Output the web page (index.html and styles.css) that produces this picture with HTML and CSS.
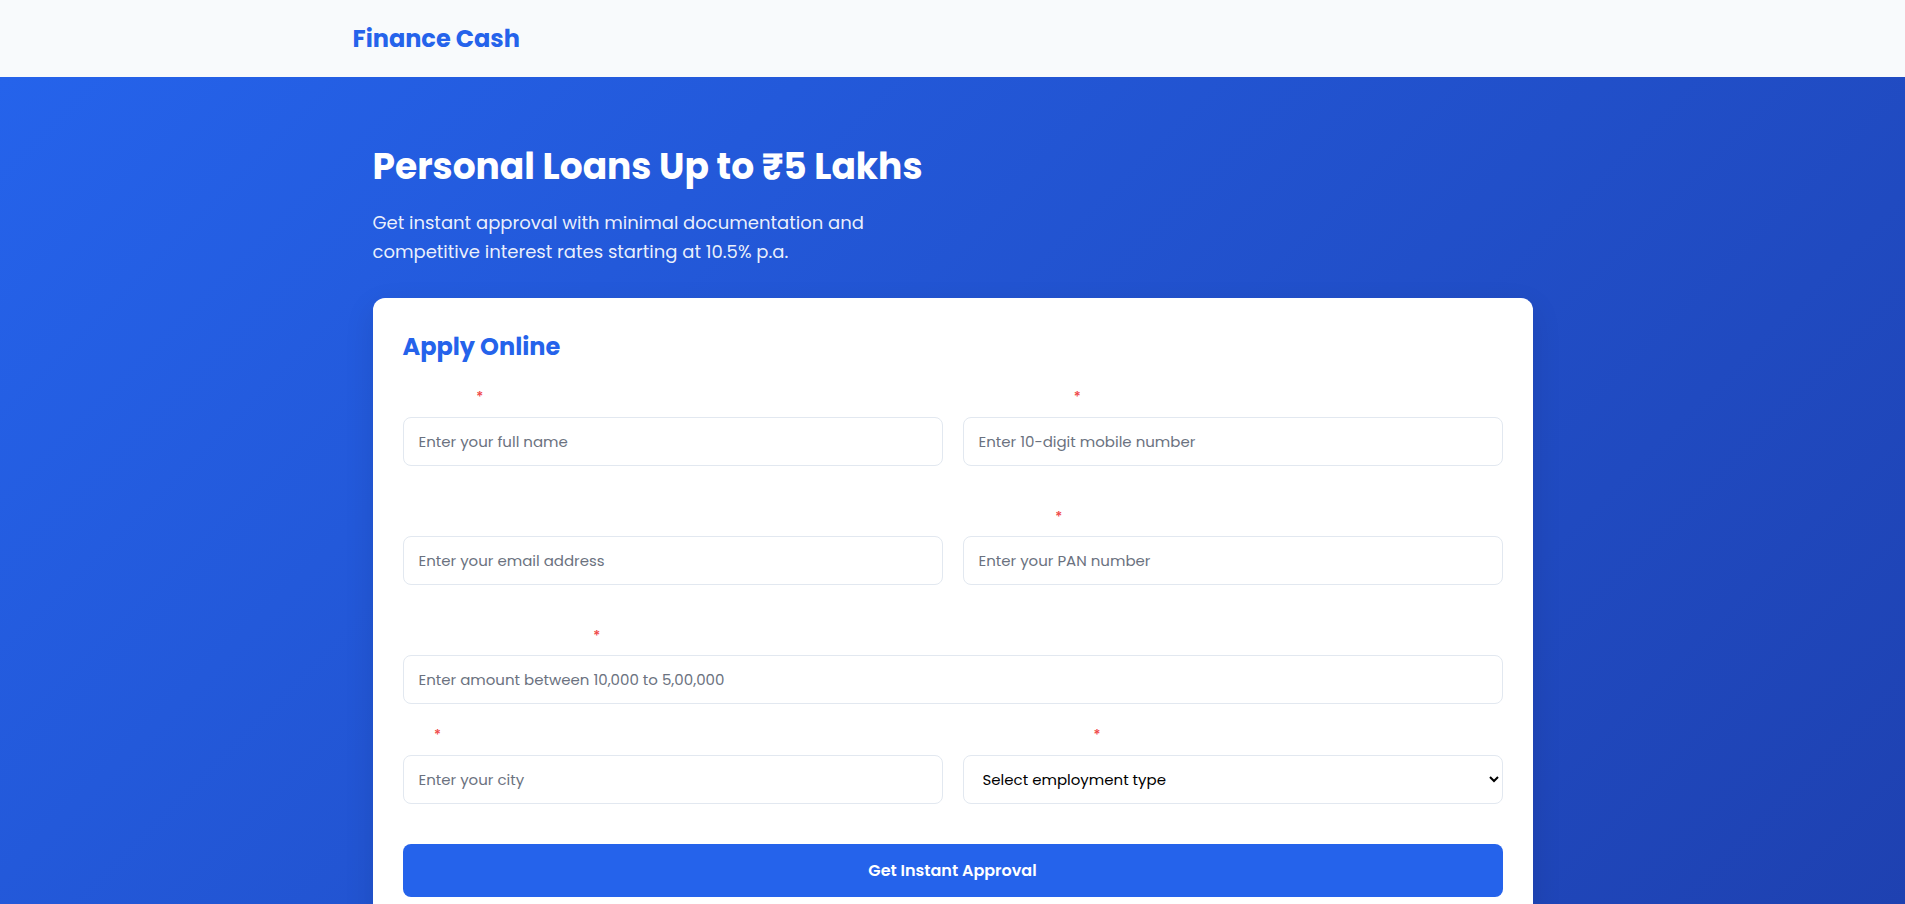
FILE: index.html
```html
<!DOCTYPE html>
<html lang="en">

<head>
    <meta charset="UTF-8">
    <meta name="viewport" content="width=device-width, initial-scale=1.0">
    <title>Finance Cash - Personal Loans</title>
    <link rel="stylesheet" href="styles.css">
</head>

<body>
    <header class="site-header">
        <div class="container">
            <a class="logo" href="#">Finance Cash</a>
        </div>
    </header>

    <section class="hero">
        <div class="container hero-inner">
            <h1>Personal Loans Up to ₹5 Lakhs</h1>
            <p class="hero-text">Get instant approval with minimal documentation and competitive interest rates starting at 10.5% p.a.</p>

            <div class="form-card">
                <h2>Apply Online</h2>
                <form id="loan-form">
                    <div class="form-row">
                        <div class="form-group">
                            <label for="name">Full Name <span class="required">*</span></label>
                            <input type="text" id="name" placeholder="Enter your full name">
                        </div>
                        <div class="form-group">
                            <label for="mobile">Mobile Number <span class="required">*</span></label>
                            <input type="tel" id="mobile" placeholder="Enter 10-digit mobile number">
                        </div>
                    </div>

                    <div class="form-row">
                        <div class="form-group">
                            <label for="email">Email Address</label>
                            <input type="email" id="email" placeholder="Enter your email address">
                        </div>
                        <div class="form-group">
                            <label for="pan">PAN Number <span class="required">*</span></label>
                            <input type="text" id="pan" placeholder="Enter your PAN number">
                        </div>
                    </div>

                    <div class="form-group">
                        <label for="amount">Loan Amount Required (₹) <span class="required">*</span></label>
                        <input type="text" id="amount" placeholder="Enter amount between 10,000 to 5,00,000">
                    </div>

                    <div class="form-row">
                        <div class="form-group">
                            <label for="city">City <span class="required">*</span></label>
                            <input type="text" id="city" placeholder="Enter your city">
                        </div>
                        <div class="form-group">
                            <label for="employment">Employment Type <span class="required">*</span></label>
                            <select id="employment">
                                <option value="">Select employment type</option>
                                <option value="salaried">Salaried</option>
                                <option value="self">Self Employed</option>
                                <option value="business">Business Owner</option>
                            </select>
                        </div>
                    </div>

                    <button type="submit" class="submit-btn">Get Instant Approval</button>
                </form>
            </div>
        </div>
    </section>
</body>

</html>
```

FILE: styles.css
```css
* {
    box-sizing: border-box;
}

body {
    margin: 0;
    padding: 0;
    font-family: "Poppins", "Inter", "Noto Sans", sans-serif;
    line-height: 1.6;
    color: #1f2937;
}

.container {
    max-width: 1200px;
    margin: 0 auto;
}

.site-header {
    background: #f8fafc;
    padding: 20px 0;
}

.logo {
    display: block;
    font-size: 24px;
    line-height: 37px;
    font-weight: 700;
    color: #2563eb;
    text-decoration: none;
}

.hero {
    background: linear-gradient(135deg, #2563eb 0%, #1e40af 100%);
    color: white;
    padding: 68px 0 64px;
}

.hero-inner {
    padding: 0 20px;
}

.hero h1 {
    font-size: 36px;
    line-height: 1.2;
    font-weight: 700;
    margin: 0 0 21px;
}

.hero-text {
    font-size: 18px;
    line-height: 1.6;
    max-width: 520px;
    margin: 0 0 31px;
    color: rgba(255, 255, 255, 0.92);
}

.form-card {
    background: white;
    border-radius: 12px;
    padding: 30px;
    box-shadow: 0 10px 30px rgba(0, 0, 0, 0.1);
}

.form-card h2 {
    font-size: 24px;
    line-height: 1.6;
    font-weight: 700;
    color: #2563eb;
    margin: 0 0 20px;
}

.form-row {
    display: grid;
    grid-template-columns: 1fr 1fr;
    gap: 20px;
    margin-bottom: 20px;
}

.form-group {
    margin-bottom: 20px;
}

.form-group label {
    display: block;
    font-size: 14px;
    font-weight: 500;
    line-height: 1.6;
    margin-bottom: 8px;
}

.required {
    color: #ef4444;
}

.form-group input,
.form-group select {
    width: 100%;
    height: 49px;
    padding: 12px 15px;
    font-family: inherit;
    font-size: 15px;
    border: 1px solid #e2e8f0;
    border-radius: 8px;
    background: white;
}

.form-group input::placeholder {
    color: #6b7280;
}

.submit-btn {
    display: block;
    width: 100%;
    padding: 15px;
    font-family: inherit;
    font-size: 16px;
    line-height: 23px;
    font-weight: 600;
    color: white;
    background: #2563eb;
    border: none;
    border-radius: 8px;
    cursor: pointer;
}
```
